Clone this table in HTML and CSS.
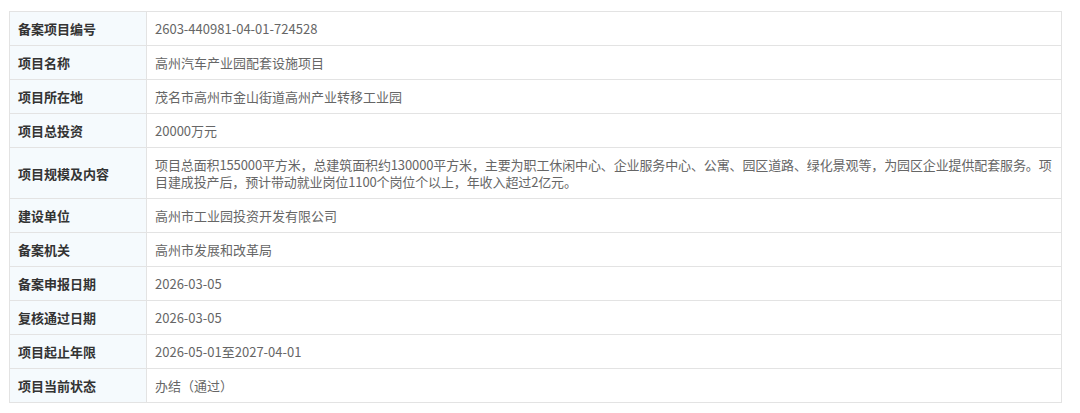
FILE: index.html
```html
<!DOCTYPE html>
<html lang="zh-CN">
<head>
<meta charset="utf-8">
<link rel="stylesheet" href="styles.css">
</head>
<body>
<table class="info">
  <tbody>
    <tr><th>备案项目编号</th><td>2603-440981-04-01-724528</td></tr>
    <tr><th>项目名称</th><td>高州汽车产业园配套设施项目</td></tr>
    <tr><th>项目所在地</th><td>茂名市高州市金山街道高州产业转移工业园</td></tr>
    <tr><th>项目总投资</th><td>20000万元</td></tr>
    <tr><th>项目规模及内容</th><td class="long">项目总面积155000平方米，总建筑面积约130000平方米，主要为职工休闲中心、企业服务中心、公寓、园区道路、绿化景观等，为园区企业提供配套服务。项目建成投产后，预计带动就业岗位1100个岗位个以上，年收入超过2亿元。</td></tr>
    <tr><th>建设单位</th><td>高州市工业园投资开发有限公司</td></tr>
    <tr><th>备案机关</th><td>高州市发展和改革局</td></tr>
    <tr><th>备案申报日期</th><td>2026-03-05</td></tr>
    <tr><th>复核通过日期</th><td>2026-03-05</td></tr>
    <tr><th>项目起止年限</th><td>2026-05-01至2027-04-01</td></tr>
    <tr><th>项目当前状态</th><td>办结（通过）</td></tr>
  </tbody>
</table>
</body>
</html>
```
FILE: styles.css
```css
html, body {
  margin: 0;
  padding: 0;
  background: #ffffff;
}
body {
  padding: 11px 18px 0 9px;
  font-family: "Microsoft YaHei", "Noto Sans CJK SC", "Liberation Sans", sans-serif;
  font-size: 13px;
}
.info {
  width: 1053px;
  border-collapse: collapse;
  table-layout: fixed;
  border: 1px solid #e3e3e3;
}
.info th,
.info td {
  border: 1px solid #e3e3e3;
  padding: 8px 8px;
  line-height: 17px;
  text-align: left;
  vertical-align: middle;
}
.info th {
  width: 120px;
  background: #f5fafd;
  color: #333333;
  font-weight: bold;
}
.info td {
  color: #666666;
  background: #ffffff;
}
.info td.long {
  letter-spacing: -0.12px;
  padding-right: 4px;
}
```
